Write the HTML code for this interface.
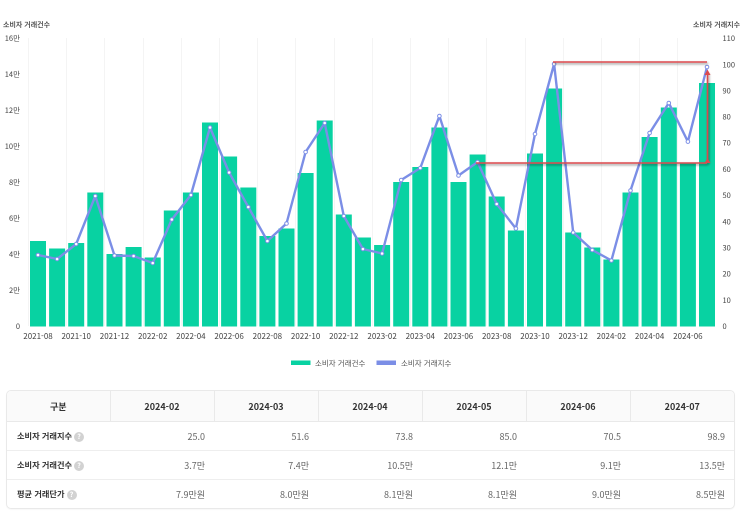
<!DOCTYPE html>
<html lang="ko">
<head>
<meta charset="utf-8">
<style>
html,body{margin:0;padding:0;background:#fff;}
body{width:743px;height:515px;overflow:hidden;position:relative;font-family:"Liberation Sans","Noto Sans CJK KR",sans-serif;}
svg{position:absolute;left:0;top:0;filter:blur(.25px);}
svg text{font-family:"Noto Sans CJK KR","Liberation Sans",sans-serif;}
.tb{position:absolute;left:6px;top:390px;width:729px;height:118.5px;box-sizing:border-box;border:1px solid #e9e9e9;border-radius:5px;overflow:hidden;font-family:"Noto Sans CJK KR","Liberation Sans",sans-serif;box-shadow:0 1px 1px rgba(0,0,0,.03);filter:blur(.25px);}
table{border-collapse:collapse;table-layout:fixed;width:727px;height:116.5px;}
th{background:#fafafa;font-size:9px;font-weight:700;color:#333;height:30px;padding:0;border-bottom:1px solid #e9e9e9;border-right:1px solid #e9e9e9;text-align:center;}
th:last-child,td:last-child{border-right:0;}
td{font-size:9px;color:#666;height:28px;padding:0 9px 0 0;text-align:right;border-bottom:1px solid #eee;}
tr:last-child td{border-bottom:0;}
td.l{text-align:left;padding:0 0 0 10px;font-weight:700;color:#333;font-size:8.2px;white-space:nowrap;}
.q{display:inline-block;width:10px;height:10px;border-radius:50%;background:#d2d2d2;color:#fff;font-size:7px;line-height:10px;text-align:center;vertical-align:0;margin-left:2px;font-weight:700;}
</style>
</head>
<body>
<svg width="743" height="385" viewBox="0 0 743 385" xmlns="http://www.w3.org/2000/svg">
<defs>
<filter id="sh" x="-10%" y="-10%" width="120%" height="120%" filterUnits="objectBoundingBox"><feDropShadow dx="1" dy="1.5" stdDeviation="1" flood-color="#000" flood-opacity=".45"/></filter>
</defs>
<g stroke="#f4f4f4" stroke-width="1">
<path d="M28.5 38V326M66.5 38V326M104.5 38V326M143.5 38V326M181.5 38V326M219.5 38V326M257.5 38V326M295.5 38V326M334.5 38V326M372.5 38V326M410.5 38V326M448.5 38V326M486.5 38V326M525.5 38V326M563.5 38V326M601.5 38V326M639.5 38V326M677.5 38V326"/>
</g>
<g fill="#08d2a2">
<rect x="30" y="241" width="16" height="85.5"/>
<rect x="49.1" y="248.5" width="16" height="78"/>
<rect x="68.2" y="243" width="16" height="83.5"/>
<rect x="87.3" y="192.5" width="16" height="134"/>
<rect x="106.5" y="254" width="16" height="72.5"/>
<rect x="125.6" y="247" width="16" height="79.5"/>
<rect x="144.7" y="257.5" width="16" height="69"/>
<rect x="163.8" y="210.5" width="16" height="116"/>
<rect x="182.9" y="192.5" width="16" height="134"/>
<rect x="202" y="122.5" width="16" height="204"/>
<rect x="221.1" y="156.5" width="16" height="170"/>
<rect x="240.3" y="187.5" width="16" height="139"/>
<rect x="259.4" y="236" width="16" height="90.5"/>
<rect x="278.5" y="228.5" width="16" height="98"/>
<rect x="297.6" y="173" width="16" height="153.5"/>
<rect x="316.7" y="120.5" width="16" height="206"/>
<rect x="335.8" y="214.5" width="16" height="112"/>
<rect x="354.9" y="237.5" width="16" height="89"/>
<rect x="374.1" y="245" width="16" height="81.5"/>
<rect x="393.2" y="182" width="16" height="144.5"/>
<rect x="412.3" y="167" width="16" height="159.5"/>
<rect x="431.4" y="127.5" width="16" height="199"/>
<rect x="450.5" y="182" width="16" height="144.5"/>
<rect x="469.6" y="154.5" width="16" height="172"/>
<rect x="488.7" y="196.5" width="16" height="130"/>
<rect x="507.9" y="230.5" width="16" height="96"/>
<rect x="527" y="153.5" width="16" height="173"/>
<rect x="546.1" y="88.5" width="16" height="238"/>
<rect x="565.2" y="232.5" width="16" height="94"/>
<rect x="584.3" y="247.5" width="16" height="79"/>
<rect x="603.4" y="259.5" width="16" height="67"/>
<rect x="622.5" y="192.5" width="16" height="134"/>
<rect x="641.6" y="137" width="16" height="189.5"/>
<rect x="660.8" y="107.5" width="16" height="219"/>
<rect x="679.9" y="163" width="16" height="163.5"/>
<rect x="699" y="83" width="16" height="243.5"/>
</g>
<polyline fill="none" stroke="#7b8ee6" stroke-width="2.4" stroke-linejoin="round" points="38,255 57.1,259 76.2,244 95.3,196 114.5,255.5 133.6,256 152.7,263 171.8,219.5 190.9,195 210,127.5 229.1,172.5 248.3,207 267.4,241 286.5,223.5 305.6,152 324.7,123 343.8,216 362.9,249 382.1,253.5 401.2,180 420.3,168 439.4,116 458.5,175.5 477.6,162 496.7,204 515.9,228.5 535,134 554.1,64 573.2,232.5 592.3,250 611.4,260.5 630.5,190.5 649.6,133 668.8,103 687.9,141.6 707,67"/>
<g fill="#fff" stroke="#7b8ee6" stroke-width="1">
<circle cx="38" cy="255" r="1.8"/><circle cx="57.1" cy="259" r="1.8"/><circle cx="76.2" cy="244" r="1.8"/><circle cx="95.3" cy="196" r="1.8"/><circle cx="114.5" cy="255.5" r="1.8"/><circle cx="133.6" cy="256" r="1.8"/><circle cx="152.7" cy="263" r="1.8"/><circle cx="171.8" cy="219.5" r="1.8"/><circle cx="190.9" cy="195" r="1.8"/><circle cx="210" cy="127.5" r="1.8"/><circle cx="229.1" cy="172.5" r="1.8"/><circle cx="248.3" cy="207" r="1.8"/><circle cx="267.4" cy="241" r="1.8"/><circle cx="286.5" cy="223.5" r="1.8"/><circle cx="305.6" cy="152" r="1.8"/><circle cx="324.7" cy="123" r="1.8"/><circle cx="343.8" cy="216" r="1.8"/><circle cx="362.9" cy="249" r="1.8"/><circle cx="382.1" cy="253.5" r="1.8"/><circle cx="401.2" cy="180" r="1.8"/><circle cx="420.3" cy="168" r="1.8"/><circle cx="439.4" cy="116" r="1.8"/><circle cx="458.5" cy="175.5" r="1.8"/><circle cx="477.6" cy="162" r="1.8"/><circle cx="496.7" cy="204" r="1.8"/><circle cx="515.9" cy="228.5" r="1.8"/><circle cx="535" cy="134" r="1.8"/><circle cx="554.1" cy="64" r="1.8"/><circle cx="573.2" cy="232.5" r="1.8"/><circle cx="592.3" cy="250" r="1.8"/><circle cx="611.4" cy="260.5" r="1.8"/><circle cx="630.5" cy="190.5" r="1.8"/><circle cx="649.6" cy="133" r="1.8"/><circle cx="668.8" cy="103" r="1.8"/><circle cx="687.9" cy="141.6" r="1.8"/><circle cx="707" cy="67" r="1.8"/>
</g>
<g filter="url(#sh)">
<g stroke="#dc4a4e" stroke-width="1.6" fill="none">
<path d="M553 62H707"/>
<path d="M476 163H707"/>
<path d="M707.5 163V72"/>
</g>
</g>
<path d="M704.5 75L707.5 69.5L710.5 75Z" fill="#dc4a4e"/>
<path d="M704.5 163L707.5 158L710.5 163Z" fill="#dc4a4e"/>
<g font-size="7px" font-weight="500" fill="#333">
<text x="3" y="27">소비자 거래건수</text>
<text x="693" y="27">소비자 거래지수</text>
</g>
<g font-size="7.5px" fill="#444" text-anchor="end">
<text x="20" y="41">16만</text>
<text x="20" y="77">14만</text>
<text x="20" y="113">12만</text>
<text x="20" y="149">10만</text>
<text x="20" y="185">8만</text>
<text x="20" y="221">6만</text>
<text x="20" y="257">4만</text>
<text x="20" y="293">2만</text>
<text x="20" y="329">0</text>
</g>
<g font-size="7.5px" fill="#444">
<text x="722.5" y="41">110</text>
<text x="722.5" y="67.5">100</text>
<text x="722.5" y="93.5">90</text>
<text x="722.5" y="119.5">80</text>
<text x="722.5" y="145.5">70</text>
<text x="722.5" y="172">60</text>
<text x="722.5" y="198">50</text>
<text x="722.5" y="224.5">40</text>
<text x="722.5" y="250.5">30</text>
<text x="722.5" y="276.5">20</text>
<text x="722.5" y="303">10</text>
<text x="722.5" y="329">0</text>
</g>
<g font-size="8px" fill="#444" text-anchor="middle">
<text x="38" y="339">2021-08</text>
<text x="76.2" y="339">2021-10</text>
<text x="114.5" y="339">2021-12</text>
<text x="152.7" y="339">2022-02</text>
<text x="190.9" y="339">2022-04</text>
<text x="229.1" y="339">2022-06</text>
<text x="267.4" y="339">2022-08</text>
<text x="305.6" y="339">2022-10</text>
<text x="343.8" y="339">2022-12</text>
<text x="382.1" y="339">2023-02</text>
<text x="420.3" y="339">2023-04</text>
<text x="458.5" y="339">2023-06</text>
<text x="496.7" y="339">2023-08</text>
<text x="535" y="339">2023-10</text>
<text x="573.2" y="339">2023-12</text>
<text x="611.4" y="339">2024-02</text>
<text x="649.6" y="339">2024-04</text>
<text x="687.9" y="339">2024-06</text>
</g>
<rect x="291" y="360.5" width="19.5" height="4.5" fill="#08d2a2"/>
<rect x="376.5" y="360.5" width="19.5" height="4.5" fill="#7b8ee6"/>
<g font-size="7.5px" fill="#555">
<text x="315" y="366">소비자 거래건수</text>
<text x="401" y="366">소비자 거래지수</text>
</g>
</svg>
<div class="tb">
<table>
<colgroup><col style="width:103px"><col style="width:104px"><col style="width:104px"><col style="width:104px"><col style="width:104px"><col style="width:104px"><col style="width:104px"></colgroup>
<tr><th>구분</th><th>2024-02</th><th>2024-03</th><th>2024-04</th><th>2024-05</th><th>2024-06</th><th>2024-07</th></tr>
<tr><td class="l">소비자 거래지수<span class="q">?</span></td><td>25.0</td><td>51.6</td><td>73.8</td><td>85.0</td><td>70.5</td><td>98.9</td></tr>
<tr><td class="l">소비자 거래건수<span class="q">?</span></td><td>3.7만</td><td>7.4만</td><td>10.5만</td><td>12.1만</td><td>9.1만</td><td>13.5만</td></tr>
<tr><td class="l">평균 거래단가<span class="q">?</span></td><td>7.9만원</td><td>8.0만원</td><td>8.1만원</td><td>8.1만원</td><td>9.0만원</td><td>8.5만원</td></tr>
</table>
</div>
</body>
</html>
